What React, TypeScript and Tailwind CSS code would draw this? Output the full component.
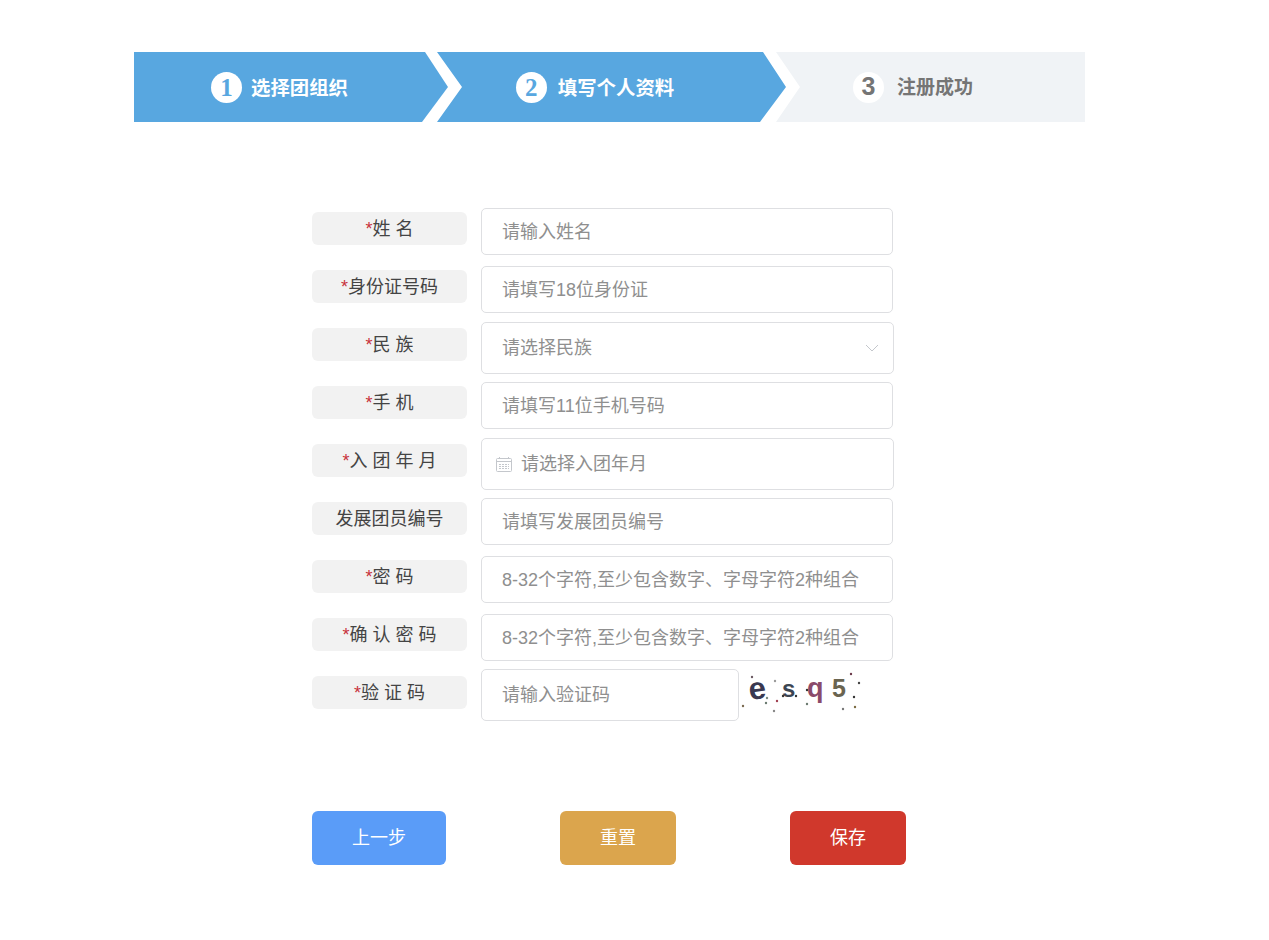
const fontStack = "font-['Liberation_Sans','Noto_Sans_CJK_SC',sans-serif]";

function Captcha() {
  const dots: [number, number, string][] = [
    [31, 18, "#6b5a63"], [54, 22, "#9a9a9a"], [130, 15, "#6b3a4a"], [138, 24, "#444"],
    [22, 47, "#7a6a50"], [46, 39, "#7b8a80"], [45, 44, "#6a7a70"], [56, 42, "#a04050"],
    [53, 52, "#888"], [62, 37, "#333"], [75, 37, "#333"], [86, 31, "#333"],
    [86, 45, "#6b7a70"], [133, 38, "#333"], [122, 50, "#777"], [134, 48, "#7a6a40"],
  ];
  return (
    <svg width="122" height="52" viewBox="20 10 122 52" className="mt-px ml-[2px]">
      <text x="28" y="40" fontFamily="Liberation Sans" fontWeight="700" fontSize="31" fill="#3a3850" transform="rotate(-8 36 34)">e</text>
      <text x="61" y="38" fontFamily="Liberation Sans" fontWeight="700" fontSize="24" fill="#3c4552">s</text>
      <text x="86" y="38" fontFamily="Liberation Sans" fontWeight="700" fontSize="27" fill="#8a4a6a">q</text>
      <text x="111" y="38" fontFamily="Liberation Sans" fontWeight="700" fontSize="25" fill="#6a6450">5</text>
      {dots.map(([x, y, c], i) => (
        <circle key={i} cx={x} cy={y} r="1.2" fill={c} />
      ))}
    </svg>
  );
}

function Label({ text, required = true }: { text: string; required?: boolean }) {
  return (
    <div className="mt-2 flex h-[33px] w-[155px] shrink-0 items-center justify-center rounded-md bg-[#f2f2f2] pt-[1px] text-[18px] text-[#444]">
      {required && <span className="text-[#c8323c]">*</span>}
      {text}
    </div>
  );
}

function Field({ placeholder }: { placeholder: string }) {
  return (
    <input
      placeholder={placeholder}
      className={`${fontStack} mt-1 ml-[14px] h-[47px] w-[412px] rounded-[5px] border border-[#dedfe2] bg-white pt-[2px] pl-5 text-[18px] outline-none placeholder:text-[#8f8f8f]`}
    />
  );
}

export default function App() {
  return (
    <div className={`${fontStack} min-h-[940px] bg-white pt-[52px] pl-[134px]`}>
      {/* Steps */}
      <div className="flex h-[70px] w-[951px] font-bold">
        <div className="flex w-[314px] items-center justify-center gap-[9px] bg-[#58a7e0] pt-[1px] pr-[23px] text-white [clip-path:polygon(0_0,291px_0,314px_35px,288px_70px,0_70px)]">
          <span className="flex size-[31px] items-center justify-center rounded-full bg-white font-['Liberation_Serif','serif'] text-[25px] font-bold text-[#58a7e0]">1</span>
          <span className="pt-[2px] text-[19.4px]">选择团组织</span>
        </div>
        <div className="-ml-[11px] flex w-[349px] items-center justify-center gap-[11px] bg-[#58a7e0] pt-[1px] pr-[33px] text-white [clip-path:polygon(0_0,326px_0,349px_35px,323px_70px,0_70px,25px_35px)]">
          <span className="flex size-[31px] items-center justify-center rounded-full bg-white font-['Liberation_Serif','serif'] text-[25px] font-bold text-[#58a7e0]">2</span>
          <span className="pt-[2px] text-[19.4px]">填写个人资料</span>
        </div>
        <div className="-ml-[10px] flex w-[309px] items-center justify-center gap-[13px] bg-[#f0f3f6] pt-[1px] pr-[35px] text-[#757575] [clip-path:polygon(0_0,309px_0,309px_70px,0_70px,24px_35px)]">
          <span className="flex size-[31px] items-center justify-center rounded-full bg-white pb-[2px] text-[25px]">3</span>
          <span className="pt-[2px] text-[19px]">注册成功</span>
        </div>
      </div>

      {/* Form */}
      <form className="mt-[82px] ml-[178px] flex w-[600px] flex-col">
        <div className="flex h-[58px]">
          <Label text="姓 名" />
          <Field placeholder="请输入姓名" />
        </div>
        <div className="flex h-[58px]">
          <Label text="身份证号码" />
          <Field placeholder="请填写18位身份证" />
        </div>
        <div className="flex h-[58px]">
          <Label text="民 族" />
          <div className="mt-0.5 ml-[14px] flex h-[52px] w-[413px] items-center justify-between rounded-[5px] border border-[#dedfe2] pr-[14px] pl-5 text-[18px] text-[#8f8f8f]">
            <span className="pt-[1px]">请选择民族</span>
            <svg width="14" height="8" viewBox="0 0 14 8" fill="none" stroke="#c4c7cc" strokeWidth="1" className="mb-[1px]">
              <path d="M1 1l6 6 6-6" />
            </svg>
          </div>
        </div>
        <div className="flex h-[58px]">
          <Label text="手 机" />
          <Field placeholder="请填写11位手机号码" />
        </div>
        <div className="flex h-[62px]">
          <Label text="入 团 年 月" />
          <div className="mt-0.5 ml-[14px] flex h-[52px] w-[413px] items-center gap-[9px] rounded-[5px] border border-[#dedfe2] pl-[14px] text-[18px] text-[#8f8f8f]">
            <svg width="16" height="15" viewBox="0 0 16 15" fill="none" stroke="#c4c7cc" strokeWidth="1">
              <rect x="0.5" y="1.5" width="15" height="13" rx="1" />
              <path d="M0.5 4.5h15M3.5 0v2M12.5 0v2" />
              <path d="M3 7.5h10M3 9.5h10M3 11.5h10" strokeDasharray="2 1" />
            </svg>
            <span className="pt-[1px]">请选择入团年月</span>
          </div>
        </div>
        <div className="-mt-1 flex h-[58px]">
          <Label text="发展团员编号" required={false} />
          <Field placeholder="请填写发展团员编号" />
        </div>
        <div className="flex h-[58px]">
          <Label text="密 码" />
          <Field placeholder="8-32个字符,至少包含数字、字母字符2种组合" />
        </div>
        <div className="flex h-[58px]">
          <Label text="确 认 密 码" />
          <Field placeholder="8-32个字符,至少包含数字、字母字符2种组合" />
        </div>
        <div className="flex h-[58px]">
          <Label text="验 证 码" />
          <input
            placeholder="请输入验证码"
            className={`${fontStack} mt-px ml-[14px] h-[52px] w-[258px] rounded-[5px] border border-[#dedfe2] bg-white pt-[1px] pl-5 text-[18px] outline-none placeholder:text-[#8f8f8f]`}
          />
          <Captcha />
        </div>

        {/* Buttons */}
        <div className="mt-[85px] flex gap-[114px]">
          <button type="button" className="h-[54px] w-[134px] rounded-md bg-[#5a9cf8] text-[18px] text-white">上一步</button>
          <button type="button" className="h-[54px] w-[116px] rounded-md bg-[#dba54d] text-[18px] text-white">重置</button>
          <button type="button" className="h-[54px] w-[116px] rounded-md bg-[#d0382c] text-[18px] text-white">保存</button>
        </div>
      </form>
    </div>
  );
}
